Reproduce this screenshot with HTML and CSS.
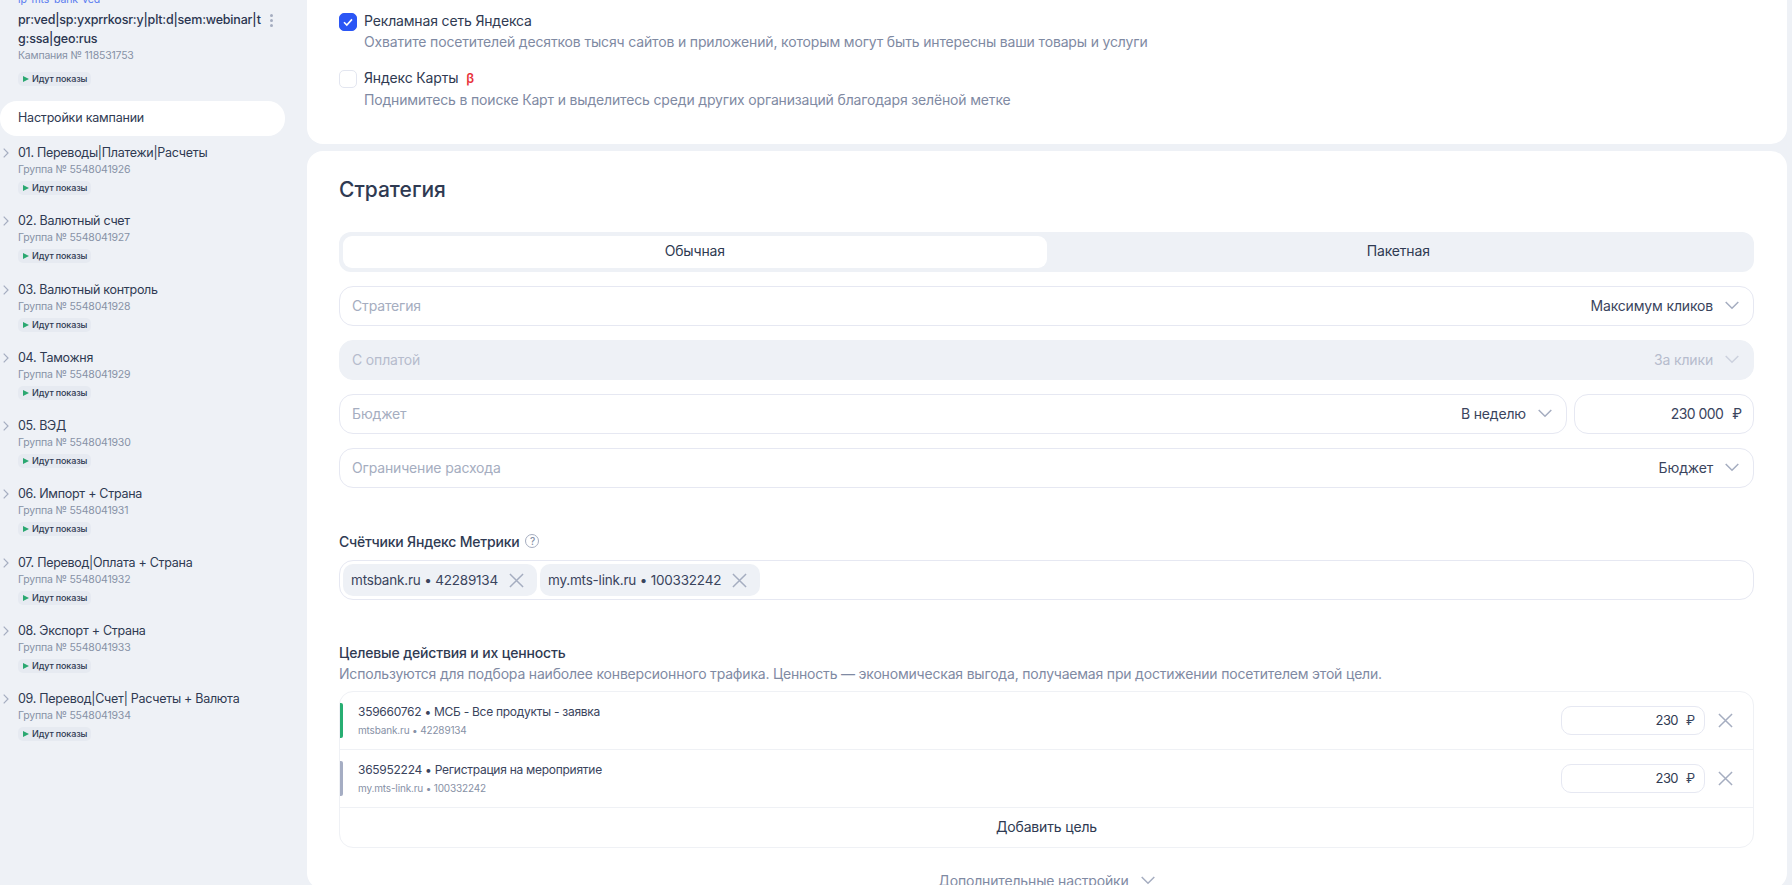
FILE: index.html
```html
<!DOCTYPE html>
<html lang="ru">
<head>
<meta charset="utf-8">
<title>Настройки кампании</title>
<link rel="stylesheet" href="styles.css">
</head>
<body>
<svg class="defs" width="0" height="0" aria-hidden="true">
  <symbol id="chev" viewBox="0 0 14 9"><path d="M.7 1l6.3 6.3L13.3 1" fill="none" stroke="currentColor" stroke-width="1.5"/></symbol>
  <symbol id="cross" viewBox="0 0 16 16"><path d="M1 1l14 14M15 1L1 15" fill="none" stroke="currentColor" stroke-width="1.6"/></symbol>
  <symbol id="right" viewBox="0 0 6 10"><path d="M.7.7l4.3 4.3-4.3 4.3" fill="none" stroke="currentColor" stroke-width="1.2"/></symbol>
</svg>
<div class="app">
  <aside class="sidebar">
    <div class="camp">
      <a class="camp-link">lp-mts-bank-ved</a>
      <div class="camp-title-row">
        <div class="camp-title">pr:ved|sp:yxprrkosr:y|plt:d|sem:webinar|t<br>g:ssa|geo:rus</div>
        <span class="kebab"><i></i><i></i><i></i></span>
      </div>
      <div class="sub">Кампания № 118531753</div>
      <div class="badge"><span class="play"></span>Идут показы</div>
    </div>
    <div class="settings-pill">Настройки кампании</div>
    <div class="groups">
      <div class="group"><svg class="g-chev"><use href="#right"/></svg><div class="g-title">01. Переводы|Платежи|Расчеты</div><div class="sub">Группа № 5548041926</div><div class="badge"><span class="play"></span>Идут показы</div></div>
      <div class="group"><svg class="g-chev"><use href="#right"/></svg><div class="g-title">02. Валютный счет</div><div class="sub">Группа № 5548041927</div><div class="badge"><span class="play"></span>Идут показы</div></div>
      <div class="group"><svg class="g-chev"><use href="#right"/></svg><div class="g-title">03. Валютный контроль</div><div class="sub">Группа № 5548041928</div><div class="badge"><span class="play"></span>Идут показы</div></div>
      <div class="group"><svg class="g-chev"><use href="#right"/></svg><div class="g-title">04. Таможня</div><div class="sub">Группа № 5548041929</div><div class="badge"><span class="play"></span>Идут показы</div></div>
      <div class="group"><svg class="g-chev"><use href="#right"/></svg><div class="g-title">05. ВЭД</div><div class="sub">Группа № 5548041930</div><div class="badge"><span class="play"></span>Идут показы</div></div>
      <div class="group"><svg class="g-chev"><use href="#right"/></svg><div class="g-title">06. Импорт + Страна</div><div class="sub">Группа № 5548041931</div><div class="badge"><span class="play"></span>Идут показы</div></div>
      <div class="group"><svg class="g-chev"><use href="#right"/></svg><div class="g-title">07. Перевод|Оплата + Страна</div><div class="sub">Группа № 5548041932</div><div class="badge"><span class="play"></span>Идут показы</div></div>
      <div class="group"><svg class="g-chev"><use href="#right"/></svg><div class="g-title">08. Экспорт + Страна</div><div class="sub">Группа № 5548041933</div><div class="badge"><span class="play"></span>Идут показы</div></div>
      <div class="group"><svg class="g-chev"><use href="#right"/></svg><div class="g-title">09. Перевод|Счет| Расчеты + Валюта</div><div class="sub">Группа № 5548041934</div><div class="badge"><span class="play"></span>Идут показы</div></div>
    </div>
  </aside>
  <main class="main">
    <section class="card card-top">
      <div class="check-row">
        <span class="checkbox on"><svg viewBox="0 0 18 18"><path d="M5 9.2l2.8 2.8L13 6.4" fill="none" stroke="#fff" stroke-width="1.6"/></svg></span>
        <div class="check-text">
          <div class="check-label">Рекламная сеть Яндекса</div>
          <div class="check-desc">Охватите посетителей десятков тысяч сайтов и приложений, которым могут быть интересны ваши товары и услуги</div>
        </div>
      </div>
      <div class="check-row">
        <span class="checkbox"></span>
        <div class="check-text">
          <div class="check-label">Яндекс Карты <span class="beta">β</span></div>
          <div class="check-desc">Поднимитесь в поиске Карт и выделитесь среди других организаций благодаря зелёной метке</div>
        </div>
      </div>
    </section>
    <section class="card card-strategy">
      <h2 class="heading">Стратегия</h2>
      <div class="tabs">
        <div class="tab active">Обычная</div>
        <div class="tab">Пакетная</div>
      </div>
      <div class="fields">
        <div class="field"><span class="ph">Стратегия</span><span class="val">Максимум кликов</span><svg class="chev"><use href="#chev"/></svg></div>
        <div class="field disabled"><span class="ph">С оплатой</span><span class="val">За клики</span><svg class="chev"><use href="#chev"/></svg></div>
        <div class="field-row">
          <div class="field grow"><span class="ph">Бюджет</span><span class="val">В неделю</span><svg class="chev"><use href="#chev"/></svg></div>
          <div class="field amount"><span class="val num">230 000</span><span class="rub">₽</span></div>
        </div>
        <div class="field"><span class="ph">Ограничение расхода</span><span class="val">Бюджет</span><svg class="chev"><use href="#chev"/></svg></div>
      </div>
      <div class="label-row">Счётчики Яндекс Метрики <span class="help">?</span></div>
      <div class="tags">
        <div class="tag">mtsbank.ru • 42289134<svg class="tag-x"><use href="#cross"/></svg></div>
        <div class="tag">my.mts-link.ru • 100332242<svg class="tag-x"><use href="#cross"/></svg></div>
      </div>
      <div class="goals-title">Целевые действия и их ценность</div>
      <div class="goals-desc">Используются для подбора наиболее конверсионного трафика. Ценность — экономическая выгода, получаемая при достижении посетителем этой цели.</div>
      <div class="goals">
        <div class="goal">
          <span class="bar green"></span>
          <div class="goal-text"><div class="goal-name">359660762 • МСБ - Все продукты - заявка</div><div class="goal-sub">mtsbank.ru • 42289134</div></div>
          <div class="goal-input"><span class="num">230</span><span class="rub">₽</span></div>
          <svg class="goal-x"><use href="#cross"/></svg>
        </div>
        <div class="goal">
          <span class="bar grey"></span>
          <div class="goal-text"><div class="goal-name">365952224 • Регистрация на мероприятие</div><div class="goal-sub">my.mts-link.ru • 100332242</div></div>
          <div class="goal-input"><span class="num">230</span><span class="rub">₽</span></div>
          <svg class="goal-x"><use href="#cross"/></svg>
        </div>
        <div class="goal-add">Добавить цель</div>
      </div>
      <div class="more">Дополнительные настройки<svg class="chev"><use href="#chev"/></svg></div>
    </section>
  </main>
</div>
</body>
</html>
```
FILE: styles.css
```css
* { box-sizing: border-box; }
html, body { margin: 0; height: 100%; overflow: hidden; }
body { background: #eef1f6; color: #2f3a52; font-family: Inter, "Noto Sans", sans-serif; font-size: 14px; letter-spacing: -0.16px; }
.defs { position: absolute; }
.app { display: flex; height: 885px; overflow: hidden; }

.sidebar { width: 307px; flex: none; margin-top: -7px; }
.camp { padding: 0 18px; height: 108px; }
.camp-link { display: block; color: #5a7cf0; font-size: 10.5px; line-height: 14px; letter-spacing: -0.1px; }
.camp-title-row { display: flex; margin-top: 3px; }
.camp-title { width: 250px; font-size: 12.5px; font-weight: 500; line-height: 19px; letter-spacing: -0.2px; white-space: nowrap; color: #2a3550; }
.kebab { display: flex; flex-direction: column; gap: 2px; margin: 4px 0 0 2px; }
.kebab i { width: 3px; height: 3px; border-radius: 50%; background: #a5adc0; }
.sub { font-size: 10.5px; line-height: 16px; letter-spacing: -0.2px; color: #8791a6; }
.badge { display: flex; align-items: center; width: 73px; height: 14px; margin-top: 3px; padding-left: 5px; background: #e6eaf1; border-radius: 5px; font-size: 9px; font-weight: 500; line-height: 14px; letter-spacing: -0.15px; color: #2f3a52; white-space: nowrap; }
.camp .badge { margin-top: 8px; }
.play { width: 0; height: 0; margin-right: 3px; border-left: 6px solid #2ba871; border-top: 3.5px solid transparent; border-bottom: 3.5px solid transparent; }
.settings-pill { width: 285px; height: 35px; background: #fff; border-radius: 17px; padding-left: 18px; line-height: 33px; font-size: 12.5px; letter-spacing: -0.2px; }
.groups { margin-top: 8px; }
.group { position: relative; height: 68.3px; padding-left: 18px; }
.g-title { font-size: 12.5px; line-height: 18px; letter-spacing: -0.28px; white-space: nowrap; }
.g-chev { position: absolute; left: 3px; top: 4px; width: 6px; height: 10px; color: #a5adc0; }

.main { flex: none; width: 1480px; display: flex; flex-direction: column; gap: 7px; }
.card { background: #fff; border-radius: 16px; padding: 0 33px 0 32px; }
.card-top { flex: none; height: 144px; padding-top: 13px; border-radius: 0 0 16px 16px; }
.check-row { display: flex; gap: 7px; height: 57px; }
.check-text { margin-top: -1px; }
.checkbox { width: 18px; height: 18px; flex: none; border: 1px solid #e3e6f0; border-radius: 5px; background: #fff; }
.checkbox.on { background: #2b56f5; border-color: #2b56f5; }
.checkbox svg { display: block; width: 18px; height: 18px; margin: -1px; }
.check-label { line-height: 17px; }
.check-desc { line-height: 17px; margin-top: 4px; color: #7f8aa3; white-space: nowrap; }
.beta { color: #e8333a; font-size: 13px; font-weight: 600; margin-left: 4px; }

.card-strategy { flex: 1; padding-top: 24px; }
.heading { margin: 0; font-size: 21px; font-weight: 500; line-height: 30px; letter-spacing: 0; color: #2f3a52; }
.tabs { display: flex; height: 40px; margin-top: 27px; padding: 4px; background: #eef1f6; border-radius: 12px; }
.tab { flex: 1; text-align: center; line-height: 30px; }
.tab.active { background: #fff; border-radius: 9px; }
.fields { display: flex; flex-direction: column; gap: 14px; margin-top: 14px; }
.field { display: flex; align-items: center; height: 40px; padding: 0 14px 2px 12px; border: 1px solid #e6e8f2; border-radius: 14px; background: #fff; }
.field.disabled { background: #eef1f6; border-color: #eef1f6; }
.field.disabled .ph, .field.disabled .val { color: #b6bccd; }
.field.disabled .chev { color: #ccd1de; }
.field-row { display: flex; gap: 7px; }
.grow { flex: 1; }
.amount { flex: none; width: 180px; justify-content: flex-end; padding-right: 11px; }
.ph { flex: 1; color: #a5adc0; }
.val { color: #3a445d; white-space: nowrap; }
.num { letter-spacing: -0.55px; }
.rub { margin-left: 9px; color: #3a445d; }
.chev { width: 14px; height: 9px; margin-left: 12px; color: #a5adc0; }
.label-row { display: flex; align-items: center; gap: 6px; margin-top: 44px; height: 18px; font-weight: 500; letter-spacing: -0.2px; }
.help { display: inline-block; width: 14px; height: 14px; border: 1.3px solid #a5adc0; border-radius: 50%; color: #8791a6; font-size: 10px; line-height: 12px; text-align: center; font-weight: 500; }
.tags { display: flex; gap: 3px; height: 40px; margin-top: 10px; padding: 3px; border: 1px solid #e6e8f2; border-radius: 14px; }
.tag { display: flex; align-items: center; height: 32px; padding: 0 13px 0 8px; background: #eef1f6; border-radius: 10px; font-size: 13.5px; letter-spacing: -0.2px; white-space: nowrap; color: #3a445d; }
.tag-x { width: 15px; height: 15px; margin-left: 11px; color: #a5adc0; }
.goals-title { margin-top: 44px; font-weight: 500; line-height: 18px; }
.goals-desc { margin-top: 3px; line-height: 18px; letter-spacing: -0.19px; color: #7f8aa3; white-space: nowrap; }
.goals { margin-top: 8px; border: 1px solid #eff1f5; border-radius: 14px; }
.goal { position: relative; display: flex; align-items: center; height: 58px; padding: 0 20px 0 18px; border-bottom: 1px solid #eff1f5; }
.bar { position: absolute; left: 0; top: 11px; width: 3px; height: 35px; border-radius: 0 2px 2px 0; }
.bar.green { background: #27ae72; }
.bar.grey { background: #a5adc3; }
.goal-text { flex: 1; }
.goal-name { font-size: 12px; line-height: 18px; letter-spacing: -0.27px; color: #3a445d; }
.goal-sub { font-size: 10px; line-height: 16px; color: #8791a6; margin-top: 1px; }
.goal-input { display: flex; justify-content: flex-end; width: 144px; height: 29px; line-height: 27px; padding: 0 9px; border: 1px solid #e6e8f2; border-radius: 10px; font-size: 13px; }
.goal-input .rub { margin-left: 8px; }
.goal-x { width: 15px; height: 15px; margin-left: 13px; color: #a5adc0; }
.goal-add { height: 39px; line-height: 37px; text-align: center; }
.more { display: flex; justify-content: center; align-items: center; margin-top: 24px; color: #7f8aa3; }
```
